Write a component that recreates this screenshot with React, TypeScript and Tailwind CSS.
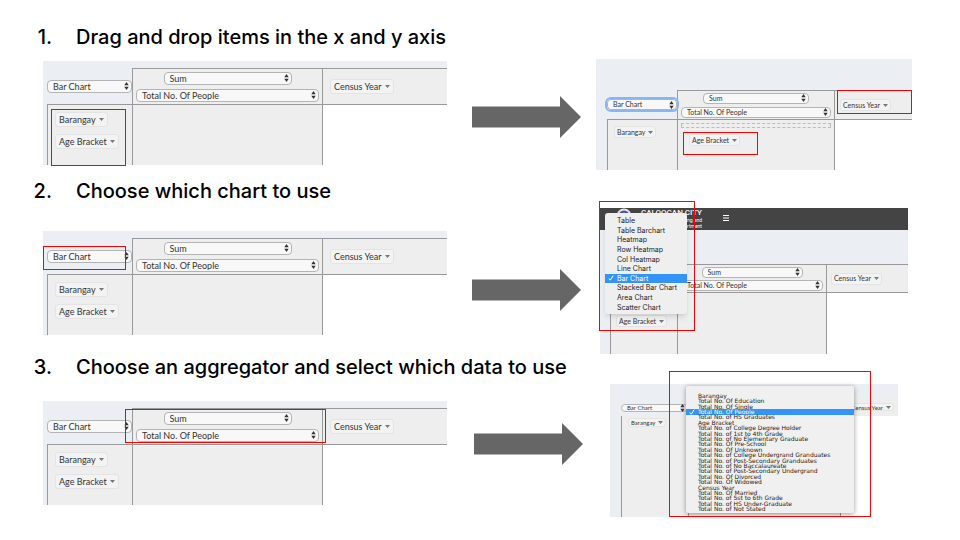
import React from "react";

const CHARTS = [
  "Table",
  "Table Barchart",
  "Heatmap",
  "Row Heatmap",
  "Col Heatmap",
  "Line Chart",
  "Bar Chart",
  "Stacked Bar Chart",
  "Area Chart",
  "Scatter Chart",
];

const FIELDS = [
  "Barangay",
  "Total No. Of Education",
  "Total No. Of Single",
  "Total No. Of People",
  "Total No. of HS Graduates",
  "Age Bracket",
  "Total No. of College Degree Holder",
  "Total No. of 1st to 4th Grade",
  "Total No. of No Elementary Graduate",
  "Total No. Of Pre-School",
  "Total No. Of Unknown",
  "Total No. of College Undergrand Granduates",
  "Total No. of Post-Secondary Granduates",
  "Total No. of No Baccalaureate",
  "Total No. of Post-Secondary Undergrand",
  "Total No. Of Divorced",
  "Total No. Of Widowed",
  "Census Year",
  "Total No. Of Married",
  "Total No. of 5st to 6th Grade",
  "Total No. of HS Under-Graduate",
  "Total No. of Not Stated",
];

function Picker({
  label,
  value,
  className,
}: {
  label: string;
  value: string;
  className: string;
}) {
  return (
    <span className={`relative block rounded-[4px] border border-[#b4b4b4] bg-[#f8f8f8] ${className}`}>
      <select
        aria-label={label}
        defaultValue={value}
        className="block h-full w-full appearance-none bg-transparent pl-[5px] leading-none outline-none"
      >
        <option>{value}</option>
      </select>
      <svg
        viewBox="0 0 5 8"
        className="pointer-events-none absolute inset-y-0 right-[2px] my-auto h-[8px] w-[5px]"
        fill="#333"
        aria-hidden="true"
      >
        <path d="M2.5 0 4.7 3.2H.3zM2.5 8 .3 4.8h4.4z" />
      </svg>
    </span>
  );
}

function Chip({ children, className = "h-[15px] px-[3px]" }: { children: string; className?: string }) {
  return (
    <button
      type="button"
      className={`flex w-fit items-center gap-[3px] rounded-[3px] border border-[#e4e4e4] bg-[#f3f3f3] whitespace-nowrap ${className}`}
    >
      {children}
      <svg viewBox="0 0 5 3" className="h-[3px] w-[5px]" fill="#777" aria-hidden="true">
        <path d="M0 0h5L2.5 3z" />
      </svg>
    </button>
  );
}

function Check() {
  return (
    <svg viewBox="0 0 6 6" className="h-[6px] w-[6px]" fill="none" stroke="#fff" aria-hidden="true">
      <path d="M.8 3.400 2.300 5.200 5.200.6" />
    </svg>
  );
}

function Arrow({ className }: { className: string }) {
  return (
    <svg viewBox="0 0 109 42" className={`h-[42px] w-[109px] ${className}`} fill="#666" aria-hidden="true">
      <path d="M0 10.5h88V0l21 21-21 21V31.500H0z" />
    </svg>
  );
}

function Mark({ className }: { className: string }) {
  return <span className={`pointer-events-none absolute z-20 border border-[#ff0000] ${className}`} />;
}

function SourcePanel({ children }: { children: React.ReactNode }) {
  return (
    <div className="relative ml-[7px] self-start bg-[#ebeff4] pt-[7px] text-[9px] text-[#333]">
      <div className="grid h-[36px] grid-cols-[89fr_190fr_125fr]">
        <div className="flex items-center pl-[4px]">
          <Picker label="Chart type" value="Bar Chart" className="h-[13px] w-full" />
        </div>
        <div className="flex flex-col items-center justify-center gap-[4px] border-t border-l border-[#999] bg-[#eee] px-[3px]">
          <Picker label="Aggregator" value="Sum" className="h-[13px] w-[128px]" />
          <Picker label="Data field" value="Total No. Of People" className="h-[13px] w-full" />
        </div>
        <div className="flex items-center border-t border-l border-[#999] bg-[#eee] pl-[7px]">
          <Chip>Census Year</Chip>
        </div>
      </div>
      <div className="grid h-[61px] grid-cols-[89fr_190fr_125fr]">
        <div className="ml-[4px] flex flex-col gap-[7px] border-t border-l border-[#999] bg-[#eee] pt-[7px] pl-[7px]">
          <Chip>Barangay</Chip>
          <Chip>Age Bracket</Chip>
        </div>
        <div className="border-t border-l border-[#999] bg-[#eee]" />
        <div className="border-t border-l border-[#999] bg-white" />
      </div>
      {children}
    </div>
  );
}

function DragResult() {
  return (
    <div className="relative mr-[48px] bg-[#ebeff4] pt-[31px] text-[7px] text-[#333]">
      <div className="grid h-[29px] grid-cols-[81fr_157fr_78fr]">
        <div className="flex items-center pl-[11px]">
          <Picker
            label="Chart type"
            value="Bar Chart"
            className="h-[11px] w-full outline-2 outline-[#84b7f3]"
          />
        </div>
        <div className="flex flex-col items-center justify-center gap-[3px] border-t border-l border-[#999] bg-[#eee] px-[3px]">
          <Picker label="Aggregator" value="Sum" className="h-[11px] w-[106px]" />
          <Picker label="Data field" value="Total No. Of People" className="h-[11px] w-full" />
        </div>
        <div className="flex items-center border-t border-l border-[#999] bg-[#eee] pl-[5px]">
          <Chip className="h-[12px] px-[2px]">Census Year</Chip>
        </div>
      </div>
      <div className="grid h-[51px] grid-cols-[81fr_157fr_78fr]">
        <div className="ml-[11px] border-t border-l border-[#999] bg-[#eee] pt-[6px] pl-[6px]">
          <Chip className="h-[12px] px-[2px]">Barangay</Chip>
        </div>
        <div className="border-t border-l border-[#999] bg-[#eee] px-[3px] pt-[3px]">
          <div className="h-[5px] border border-dashed border-[#bbb]" />
          <div className="pt-[6px] pl-[8px]">
            <Chip className="h-[12px] px-[2px]">Age Bracket</Chip>
          </div>
        </div>
        <div className="border-t border-l border-[#999] bg-white" />
      </div>
      <Mark className="top-[73px] left-[87px] h-[23px] w-[75px]" />
      <Mark className="top-[31px] right-0 h-[24px] w-[75px]" />
    </div>
  );
}

function ChartResult() {
  return (
    <div className="relative mr-[52px] ml-[4px] bg-[#ebeff4] text-[7px] text-[#333]">
      <header className="flex h-[22px] bg-[#444] pl-[16px] text-white">
        <svg viewBox="0 0 16 16" className="h-[16px] w-[16px]" aria-hidden="true">
          <circle cx="8" cy="8" r="7.500" fill="#e8e4ea" />
          <circle cx="8" cy="8" r="5.500" fill="#3d56a6" />
          <path d="M2.500 8h11a5.500 5.500 0 0 1-11 0z" fill="#c33" />
          <path d="m8 4 1 3h3L9.500 9l1 3L8 10.200 5.500 12l1-3L4 7h3z" fill="#f3d263" />
        </svg>
        <div className="ml-[8px] w-[62px] text-right font-['Roboto',sans-serif] text-[5px] leading-[6px] whitespace-nowrap">
          <p className="text-[8px] leading-[9px] font-medium">CALOOCAN CITY</p>
          <p>City Planning and</p>
          <p>Department</p>
        </div>
        <button type="button" aria-label="Toggle menu" className="mt-[7px] ml-[21px] h-[6px] w-[6px]">
          <svg viewBox="0 0 6 6" className="h-[6px] w-[6px]" stroke="#fff" aria-hidden="true">
            <path d="M0 .5h6M0 3h6M0 5.500h6" />
          </svg>
        </button>
      </header>
      <div className="mt-[34px] grid h-[28px] grid-cols-[77fr_149fr_82fr]">
        <div />
        <div className="flex flex-col items-center justify-center gap-[2px] border-t border-l border-[#999] bg-[#eee] px-[3px]">
          <Picker label="Aggregator" value="Sum" className="h-[11px] w-[101px]" />
          <Picker label="Data field" value="Total No. Of People" className="h-[11px] w-full" />
        </div>
        <div className="flex items-center border-t border-l border-[#999] bg-[#eee] pl-[4px]">
          <Chip className="h-[12px] px-[2px]">Census Year</Chip>
        </div>
      </div>
      <div className="grid h-[62px] grid-cols-[77fr_149fr_82fr]">
        <div className="ml-[10px] border-t border-l border-[#999] bg-[#eee] pt-[22px] pl-[5px]">
          <Chip className="h-[12px] px-[2px]">Age Bracket</Chip>
        </div>
        <div className="border-t border-l border-[#999] bg-[#eee]" />
        <div className="border-t border-l border-[#999] bg-white" />
      </div>
      <ul
        role="listbox"
        aria-label="Chart type"
        className="absolute top-[5px] left-[5px] z-10 grid h-[101px] w-[82px] auto-rows-fr rounded-[3px] bg-[#efefef] pt-[3px] pb-[2px] font-['Inter',sans-serif] text-[7px] leading-none text-[#222] shadow-md"
      >
        {CHARTS.map((chart) => (
          <li
            key={chart}
            role="option"
            aria-selected={chart === "Bar Chart"}
            className="flex items-center whitespace-nowrap aria-selected:bg-[#3393f7] aria-selected:text-white"
          >
            <span className="flex w-[12px] justify-center">{chart === "Bar Chart" && <Check />}</span>
            {chart}
          </li>
        ))}
      </ul>
      <Mark className="-top-[7px] -left-px h-[130px] w-[96px]" />
    </div>
  );
}

function FieldResult() {
  return (
    <div className="relative mr-[62px] ml-[14px] bg-[#ebeff4] pt-[14px] font-['DejaVu_Sans',sans-serif] text-[6px] text-[#333]">
      <div className="grid h-[18px] grid-cols-[78fr_152fr_58fr]">
        <div className="flex items-center pt-[2px] pl-[11px]">
          <Picker label="Chart type" value="Bar Chart" className="h-[8px] w-full" />
        </div>
        <div className="bg-[#eee]" />
        <div className="flex items-center justify-end bg-[#eee] pr-[4px]">
          <Chip className="h-[8px] px-[2px]">Census Year</Chip>
        </div>
      </div>
      <div className="grid h-[101px] grid-cols-[78fr_152fr_58fr]">
        <div className="ml-[11px] border-l border-[#999] bg-[#eee] pt-[2px] pl-[6px]">
          <Chip className="h-[9px] px-[2px]">Barangay</Chip>
        </div>
        <div className="border-l border-[#999] bg-[#eee]" />
        <div className="border-l border-[#999] bg-white" />
      </div>
      <ul
        role="listbox"
        aria-label="Data field"
        className="absolute top-[2px] left-[76px] z-10 grid h-[127px] w-[168px] auto-rows-fr rounded-[2px] bg-[#f0f0f0] pt-[7px] pb-px leading-none text-[#222] shadow-[0_1px_5px_#0006]"
      >
        {FIELDS.map((field) => (
          <li
            key={field}
            role="option"
            aria-selected={field === "Total No. Of People"}
            className="flex min-h-0 items-center whitespace-nowrap aria-selected:bg-[#3393f7] aria-selected:text-white"
          >
            <span className="flex w-[12px] justify-center">{field === "Total No. Of People" && <Check />}</span>
            {field}
          </li>
        ))}
      </ul>
      <Mark className="-top-[13px] left-[59px] h-[146px] w-[202px]" />
    </div>
  );
}

function Step({
  number,
  title,
  className,
  source,
  arrow,
  result,
}: {
  number: string;
  title: string;
  className: string;
  source: React.ReactNode;
  arrow: React.ReactNode;
  result: React.ReactNode;
}) {
  return (
    <section className={`grid grid-cols-[411fr_149fr_364fr] grid-rows-[auto_1fr] pl-[36px] ${className}`}>
      <h2 className="col-span-2 flex h-[26px] items-center gap-[24px] font-['Inter',sans-serif] text-[20px] font-medium whitespace-nowrap text-black">
        <span className="flex w-[16px] justify-end">{number}</span>
        {title}
      </h2>
      <div className="col-start-3 row-span-2 row-start-1">{result}</div>
      <div className="col-start-1 row-start-2">{source}</div>
      <div className="col-start-2 row-start-2">{arrow}</div>
    </section>
  );
}

export default function App() {
  return (
    <main className="min-h-screen bg-white font-['Noto_Sans',sans-serif] [&_button]:font-['Lato',sans-serif] [&_select]:font-['Lato',sans-serif]">
      <Step
        number="1."
        title="Drag and drop items in the x and y axis"
        className="pt-[24px] pb-[8px]"
        source={
          <div className="pt-[11px]">
            <SourcePanel>
              <Mark className="top-[48px] left-[8px] h-[57px] w-[75px]" />
            </SourcePanel>
          </div>
        }
        arrow={<Arrow className="mt-[46px] ml-[25px]" />}
        result={
          <div className="pt-[35px]">
            <DragResult />
          </div>
        }
      />
      <Step
        number="2."
        title="Choose which chart to use"
        className=""
        source={
          <div className="pt-[27px]">
            <SourcePanel>
              <Mark className="top-[15px] left-0 h-[24px] w-[83px]" />
            </SourcePanel>
          </div>
        }
        arrow={<Arrow className="mt-[65px] ml-[25px]" />}
        result={
          <div className="pt-[30px]">
            <ChartResult />
          </div>
        }
      />
      <Step
        number="3."
        title="Choose an aggregator and select which data to use"
        className=""
        source={
          <div className="pt-[21px]">
            <SourcePanel>
              <Mark className="top-[8px] left-[82px] h-[34px] w-[201px]" />
            </SourcePanel>
          </div>
        }
        arrow={<Arrow className="mt-[43px] ml-[27px]" />}
        result={
          <div className="pt-[30px]">
            <FieldResult />
          </div>
        }
      />
    </main>
  );
}
